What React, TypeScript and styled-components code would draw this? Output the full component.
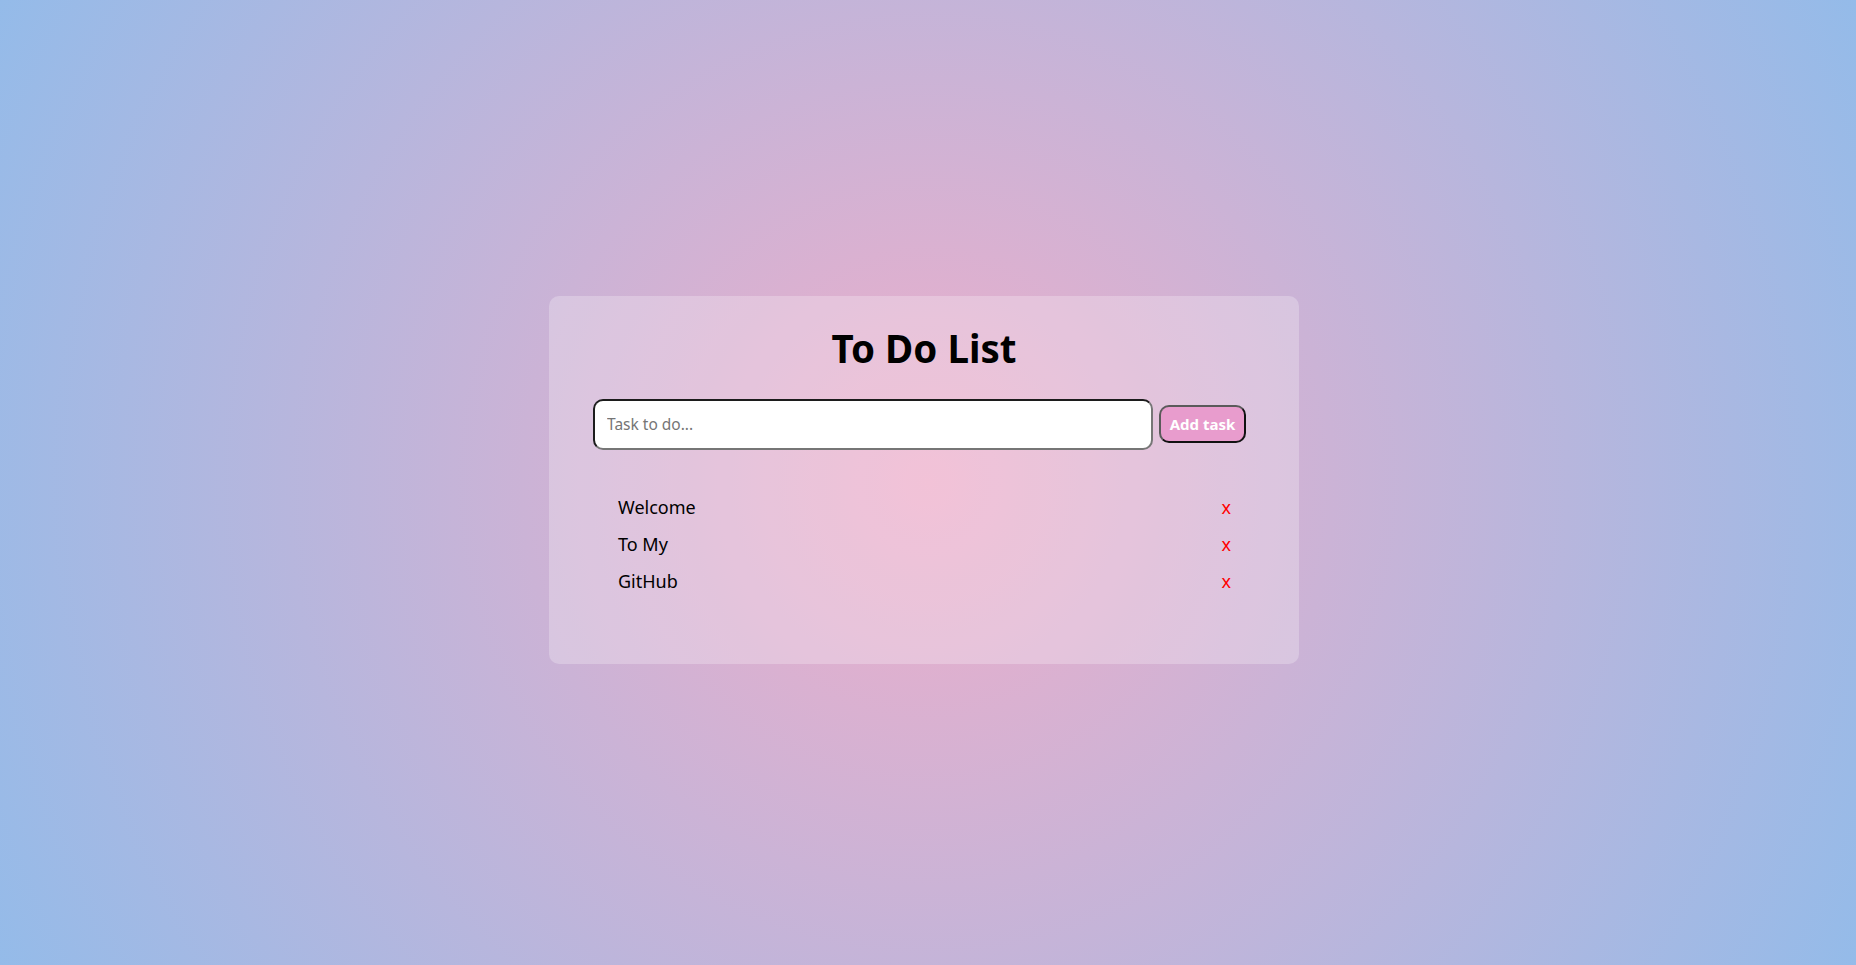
import React, { useState } from "react";
import styled, { createGlobalStyle } from "styled-components";

const GlobalStyle = createGlobalStyle`
  html, body {
    margin: 0;
    padding: 0;
  }
  body {
    font-family: "Noto Sans", "Open Sans", sans-serif;
    min-height: 100vh;
    background: radial-gradient(circle, #eeaeca 0%, #94bbe9 100%);
    background-attachment: fixed;
  }
  * { box-sizing: border-box; }
`;

const Page = styled.div`
  min-height: 100vh;
  display: flex;
  align-items: center;
  justify-content: center;
  padding-right: 8px;
`;

const Card = styled.div`
  width: 750px;
  background: rgba(255, 255, 255, 0.25);
  border-radius: 10px;
  padding: 28px 44px 71px 44px;
  margin-top: -6px;
`;

const Title = styled.h1`
  margin: 0 0 27px;
  text-align: center;
  font-size: 38.5px;
  line-height: 48px;
  font-weight: 700;
  color: #000;
`;

const Form = styled.form`
  display: flex;
  align-items: center;
  gap: 6px;
  padding-right: 9px;
`;

const Input = styled.input`
  flex: 1;
  height: 51px;
  padding: 0 12px;
  font-family: inherit;
  font-size: 15.5px;
  border-radius: 10px;
  border: 2px solid;
  border-color: #1c1c1c #767676 #767676 #1c1c1c;
  background: #fff;
  outline: none;
  &::placeholder {
    color: #757575;
  }
`;

const AddButton = styled.button`
  height: 38px;
  width: 87px;
  padding: 0;
  font-family: inherit;
  font-size: 15px;
  font-weight: 700;
  color: #fff;
  background: #e89ccd;
  border: 2px solid;
  border-color: #5a5a5a #111 #111 #5a5a5a;
  border-radius: 10px;
  cursor: pointer;
`;

const List = styled.ul`
  list-style: none;
  margin: 45px 0 0;
  padding: 0 24px 0 25px;
  display: flex;
  flex-direction: column;
  gap: 13px;
`;

const Item = styled.li`
  display: flex;
  align-items: center;
  justify-content: space-between;
  height: 24px;
  font-size: 18px;
  color: #000;
`;

const RemoveButton = styled.button`
  background: none;
  border: none;
  padding: 0;
  color: #ff0000;
  font-family: inherit;
  font-size: 18px;
  line-height: 24px;
  cursor: pointer;
`;

export default function App() {
  const [tasks, setTasks] = useState<string[]>(["Welcome", "To My", "GitHub"]);
  const [text, setText] = useState("");

  const add = (e: React.FormEvent) => {
    e.preventDefault();
    if (!text.trim()) return;
    setTasks([...tasks, text.trim()]);
    setText("");
  };

  return (
    <>
      <GlobalStyle />
      <Page>
        <Card>
          <Title>To Do List</Title>
          <Form onSubmit={add}>
            <Input
              placeholder="Task to do..."
              value={text}
              onChange={(e) => setText(e.target.value)}
            />
            <AddButton type="submit">Add task</AddButton>
          </Form>
          <List>
            {tasks.map((t, i) => (
              <Item key={i}>
                <span>{t}</span>
                <RemoveButton onClick={() => setTasks(tasks.filter((_, j) => j !== i))}>
                  x
                </RemoveButton>
              </Item>
            ))}
          </List>
        </Card>
      </Page>
    </>
  );
}
